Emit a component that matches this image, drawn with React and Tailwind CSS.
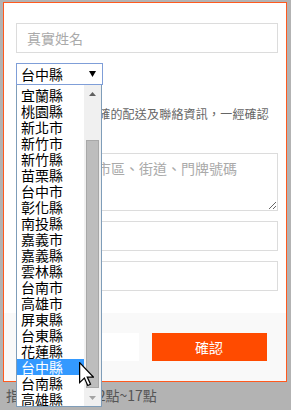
import { useState } from "react";

const counties = [
  "宜蘭縣",
  "桃園縣",
  "新北市",
  "新竹市",
  "新竹縣",
  "苗栗縣",
  "台中市",
  "彰化縣",
  "南投縣",
  "嘉義市",
  "嘉義縣",
  "雲林縣",
  "台南市",
  "高雄市",
  "屏東縣",
  "台東縣",
  "花蓮縣",
  "台中縣",
  "台南縣",
  "高雄縣",
];

function App() {
  const [county] = useState("台中縣");

  return (
    <div
      className="relative min-h-[410px] overflow-hidden bg-[#b3b3b3] pt-[2px] pl-[3px]"
      style={{ fontFamily: '"Noto Sans CJK TC", "Noto Sans", sans-serif' }}
    >
      {/* modal */}
      <div className="w-[284px] border border-[#ff5a1f] bg-white">
        <div className="pl-[12px] pr-[8px] pt-[20px] pb-[22px]">
          <input
            placeholder="真實姓名"
            className="block h-[30px] w-full border border-[#dcdcdc] px-[10px] text-[14px] outline-none placeholder:text-[#aaaaaa]"
          />

          <div className="mt-[10px] flex h-[22px] w-[87px] items-center justify-between border border-[#7f9ed8] pl-[4px] pr-[6px] text-[14px] leading-[16px] text-black">
            <span>{county}</span>
            <svg width="7" height="6" viewBox="0 0 7 6">
              <path d="M0 0h7L3.5 6z" fill="#000" />
            </svg>
          </div>

          <p className="mt-[19px] pl-[9px] text-[12px] leading-[20px] tracking-[0.2px] text-[#666666]">
            請務必填寫正確的配送及聯絡資訊，一經確認
            <br />
            後恕不更改。
          </p>

          <textarea
            placeholder="請填寫完整市區、街道、門牌號碼"
            className="mt-[9px] block h-[58px] w-full border border-[#dcdcdc] px-[10px] py-[4px] text-[14px] outline-none placeholder:text-[#aaaaaa]"
          />

          <input className="mt-[10px] block h-[30px] w-full border border-[#dcdcdc] px-[10px] text-[14px] outline-none" />
          <input className="mt-[10px] block h-[30px] w-full border border-[#dcdcdc] px-[10px] text-[14px] outline-none" />
        </div>

        <div className="flex h-[68px] justify-center gap-[13px] bg-[#f9f9f9] pt-[20px]">
          <button className="h-[28px] w-[115px] bg-white text-[14px] text-[#666666]">
            取消
          </button>
          <button className="h-[28px] w-[115px] bg-[#ff4b00] text-[14px] text-white">
            確認
          </button>
        </div>
      </div>

      <p className="mt-[3px] pl-[3px] text-[14px] leading-[20px] text-[#555555]">
        指定收貨時間12點~17點
      </p>

      {/* open select list */}
      <div className="absolute left-[16px] top-[85px] flex h-[322px] w-[86px] border border-t-0 border-[#7f9db9] bg-white">
        <ul className="flex-1 overflow-hidden pt-[2px]">
          {counties.map((c) => (
            <li
              key={c}
              className={
                c === county
                  ? "h-[16px] bg-[#3399ff] pl-[4px] text-[14px] leading-[16px] text-white"
                  : "h-[16px] pl-[4px] text-[14px] leading-[16px] text-black"
              }
            >
              {c}
            </li>
          ))}
        </ul>
        <div className="flex w-[17px] flex-col items-center bg-[#f0f0f0]">
          <div className="flex h-[17px] items-center justify-center">
            <svg width="7" height="4" viewBox="0 0 7 4">
              <path d="M3.5 0L7 4H0z" fill="#606060" />
            </svg>
          </div>
          <div className="mt-[38px] h-[248px] w-[13px] border border-[#a8a8a8] bg-[#bdbdbd]" />
          <div className="mt-auto flex h-[17px] items-center justify-center">
            <svg width="7" height="4" viewBox="0 0 7 4">
              <path d="M0 0h7L3.5 4z" fill="#a3a3a3" />
            </svg>
          </div>
        </div>
      </div>

      {/* mouse pointer */}
      <svg
        className="absolute left-[79px] top-[362px]"
        width="15"
        height="25"
        viewBox="0 0 12 20"
      >
        <path
          d="M0.5 0.5V16.5L4.3 12.8L7 18.8L9.2 17.8L6.6 12H11.5Z"
          fill="#fff"
          stroke="#000"
          strokeWidth="1"
          strokeLinejoin="miter"
        />
      </svg>
    </div>
  );
}

export default App;
